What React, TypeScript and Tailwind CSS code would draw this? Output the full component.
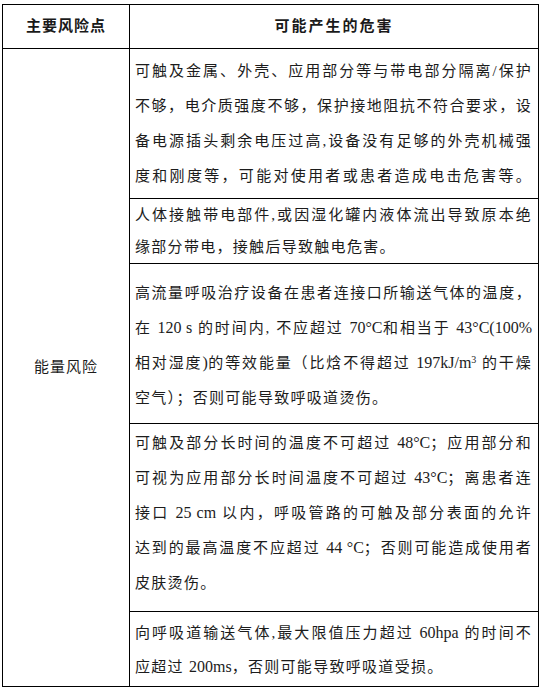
import React from "react";

const font = {
  fontFamily: '"Liberation Serif", "Noto Sans CJK SC", serif',
};

// one visual line stretched to the full cell width, as in the document
function J({ children }: { children: React.ReactNode }) {
  return (
    <div className="text-justify [text-align-last:justify]">{children}</div>
  );
}

function L({ children }: { children: React.ReactNode }) {
  return <div>{children}</div>;
}

// latin runs (numbers, units) sit a touch larger, like Times in the doc
function N({ children }: { children: React.ReactNode }) {
  return (
    <span className="text-[16px] leading-none tracking-normal">{children}</span>
  );
}

const cell =
  "border-t border-black pl-[5px] pr-[6px] text-[15px] tracking-[1.3px] text-[#1c1c1c]";

export default function App() {
  return (
    <div className="min-h-[689px] bg-white pt-[4px] pl-[2px]" style={font}>
      <div className="grid w-[537px] grid-cols-[127px_1fr] border border-black">
        <div className="flex h-[43px] items-center justify-center border-r border-black text-[15px] font-bold tracking-[1px] text-[#1a1a1a]">
          主要风险点
        </div>
        <div className="flex h-[43px] items-center justify-center text-[15px] font-bold tracking-[2px] text-[#1a1a1a]">
          可能产生的危害
        </div>

        <div className="row-span-5 flex items-center justify-center border-t border-r border-black text-[15px] tracking-[1px] text-[#1c1c1c]">
          能量风险
        </div>

        <div className={`${cell} pt-[5px] pb-[4px] leading-[35px]`}>
          <J>可触及金属、外壳、应用部分等与带电部分隔离/保护</J>
          <J>不够，电介质强度不够，保护接地阻抗不符合要求，设</J>
          <J>备电源插头剩余电压过高,设备没有足够的外壳机械强</J>
          <J>度和刚度等，可能对使用者或患者造成电击危害等。</J>
        </div>

        <div className={`${cell} leading-[32px]`}>
          <J>人体接触带电部件,或因湿化罐内液体流出导致原本绝</J>
          <L>缘部分带电，接触后导致触电危害。</L>
        </div>

        <div className={`${cell} pt-[12px] pb-[7px] leading-[35px]`}>
          <J>高流量呼吸治疗设备在患者连接口所输送气体的温度，</J>
          <J>
            在 <N>120 s</N> 的时间内, 不应超过 <N>70°C</N>和相当于 <N>43°C(100%</N>
          </J>
          <J>
            相对湿度<N>)</N>的等效能量（比焓不得超过{" "}
            <N>
              197kJ/m<sup className="text-[10px] leading-none">3</sup>
            </N>{" "}
            的干燥
          </J>
          <L>空气）；否则可能导致呼吸道烫伤。</L>
        </div>

        <div className={`${cell} pt-[2px] pb-[10px] leading-[35px]`}>
          <J>
            可触及部分长时间的温度不可超过 <N>48°C</N>；应用部分和
          </J>
          <J>
            可视为应用部分长时间温度不可超过 <N>43°C</N>；离患者连
          </J>
          <J>
            接口 <N>25 cm</N> 以内，呼吸管路的可触及部分表面的允许
          </J>
          <J>
            达到的最高温度不应超过 <N>44 °C</N>；否则可能造成使用者
          </J>
          <L>皮肤烫伤。</L>
        </div>

        <div className={`${cell} pt-[4px] pb-[2px] leading-[34px]`}>
          <J>
            向呼吸道输送气体,最大限值压力超过 <N>60hpa</N> 的时间不
          </J>
          <L>
            应超过 <N>200ms</N>，否则可能导致呼吸道受损。
          </L>
        </div>
      </div>
    </div>
  );
}
